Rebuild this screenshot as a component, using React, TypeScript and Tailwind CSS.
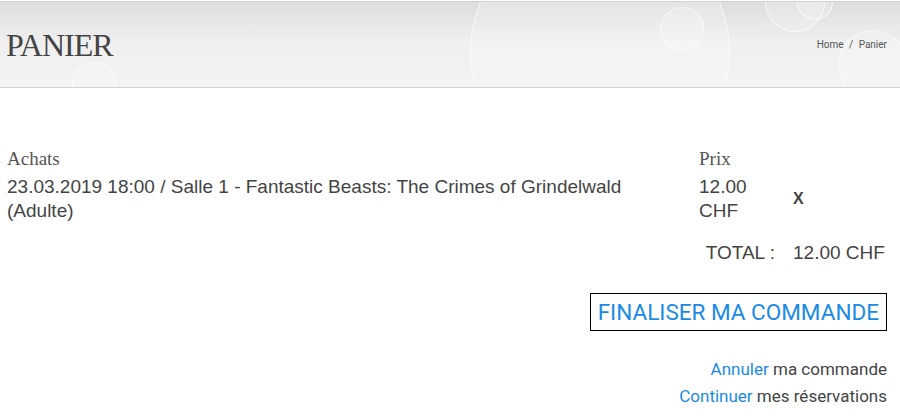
import React from 'react'

const slab = { fontFamily: '"Liberation Serif", "DejaVu Serif", serif' }
const sans = { fontFamily: '"Liberation Sans", Arial, sans-serif' }
const ui = { fontFamily: 'Roboto, "Open Sans", sans-serif' }

function Bubble({ className }: { className: string }) {
  return <div className={`absolute rounded-full border border-white/60 bg-white/20 ${className}`} />
}

function Header() {
  return (
    <header className="relative mt-px h-[87px] overflow-hidden border-y border-[#d2d2d2] bg-gradient-to-b from-[#dedede] via-[#f0f0f0] to-[#f3f3f3]">
      <Bubble className="left-[660px] top-[5px] h-[44px] w-[44px]" />
      <Bubble className="left-[765px] top-[-30px] h-[60px] w-[60px]" />
      <Bubble className="left-[797px] top-[-18px] h-[36px] w-[36px]" />
      <Bubble className="left-[838px] top-[28px] h-[70px] w-[70px]" />
      <Bubble className="left-[470px] top-[-80px] h-[260px] w-[260px] border-white/40 bg-white/10" />
      <Bubble className="left-[72px] top-[60px] h-[44px] w-[44px] border-white/40 bg-white/10" />
      <div className="relative flex h-full items-center justify-between pl-[6px] pr-[13px]">
        <h1 style={slab} className="text-[32px] leading-none tracking-[-1px] text-[#444]">PANIER</h1>
        <nav style={ui} className="text-[10px] text-[#555]">
          Home <span className="mx-[3px]">/</span> Panier
        </nav>
      </div>
    </header>
  )
}

export default function App() {
  return (
    <div className="min-h-screen w-[900px] bg-white">
      <Header />
      <main className="pl-[7px] pr-[13px] pt-[59px]">
        <div style={sans} className="grid grid-cols-[684px_94px_102px] text-[19px] leading-[24px] text-[#444]">
          <div style={slab} className="text-[19px] text-[#555]">Achats</div>
          <div style={slab} className="pl-2 text-[19px] text-[#555]">Prix</div>
          <div />

          <div className="pt-[4px]">23.03.2019 18:00 / Salle 1 - Fantastic Beasts: The Crimes of Grindelwald (Adulte)</div>
          <div className="pl-2 pt-[4px]">12.00 CHF</div>
          <div className="flex items-center pl-2 pt-[4px] text-[16px] font-bold">X</div>

          <div className="col-span-2 pr-[10px] pt-[18px] text-right">TOTAL :</div>
          <div className="pl-2 pt-[18px]">12.00&nbsp;CHF</div>
        </div>

        <div className="mt-[28px] flex justify-end">
          <button style={ui} className="border border-black px-[7px] py-[5px] text-[22.5px] leading-[26px] text-[#1a8ae8]">
            FINALISER MA COMMANDE
          </button>
        </div>

        <div style={ui} className="mt-[27px] flex flex-col items-end gap-[4px] text-[17px] leading-[23px] text-[#444]">
          <p><a className="text-[#1a8ae8]">Annuler</a> ma commande</p>
          <p><a className="text-[#1a8ae8]">Continuer</a> mes réservations</p>
        </div>
      </main>
    </div>
  )
}
